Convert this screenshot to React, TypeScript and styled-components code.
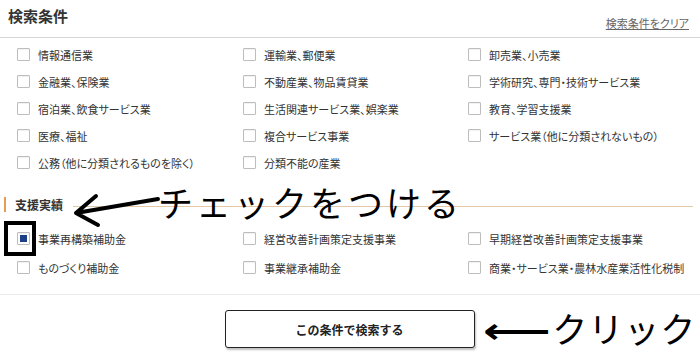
import React from "react";
import styled, { createGlobalStyle } from "styled-components";

const Global = createGlobalStyle`
  html, body { margin: 0; padding: 0; background: #fff; }
  body {
    font-family: "Noto Sans CJK JP", "Noto Sans", sans-serif;
    color: #333;
    font-feature-settings: "palt";
  }
  * { box-sizing: border-box; }
`;

const Page = styled.div`
  position: relative;
  width: 700px;
  height: 356px;
  overflow: hidden;
  background: #fff;
`;

const Header = styled.div`
  display: flex;
  justify-content: space-between;
  align-items: flex-end;
  height: 38px;
  padding: 0 11px 7px 8px;
  border-bottom: 1px solid #d6d6d6;
`;

const Title = styled.h2`
  margin: 0 0 5px;
  font-size: 15px;
  font-weight: 700;
  line-height: 18px;
  color: #333;
  font-feature-settings: normal;
`;

const ClearLink = styled.a`
  font-size: 11px;
  line-height: 14px;
  color: #666;
  text-decoration: underline;
  cursor: pointer;
`;

const Grid = styled.div<{ $rowH: number; $top: number }>`
  display: grid;
  grid-template-columns: 226px 225px 1fr;
  grid-auto-rows: ${(p) => p.$rowH}px;
  padding: ${(p) => p.$top}px 0 0 17px;
`;

const Item = styled.label`
  display: flex;
  align-items: center;
  gap: 8px;
  font-size: 11px;
  color: #333;
  white-space: nowrap;
`;

const Box = styled.span<{ $checked?: boolean }>`
  position: relative;
  flex: none;
  width: 13px;
  height: 13px;
  border: 1px solid #bdbdbd;
  border-radius: 1px;
  background: #fff;
  box-shadow: inset 0 1px 1px rgba(0, 0, 0, 0.06);
  display: flex;
  align-items: center;
  justify-content: center;
  &::after {
    content: "";
    display: ${(p) => (p.$checked ? "block" : "none")};
    width: 7px;
    height: 7px;
    background: #1c3f86;
  }
`;

const SectionHead = styled.div`
  display: flex;
  align-items: center;
  margin: 20px 7px 0 4px;
  height: 16px;
`;

const Bar = styled.span`
  width: 2px;
  height: 15px;
  background: #e59a55;
`;

const SectionTitle = styled.span`
  margin-left: 9px;
  font-size: 12px;
  font-weight: 700;
  color: #333;
`;

const SectionLine = styled.span`
  flex: 1;
  height: 1px;
  margin: 4px 0 0 10px;
  background: #e2c7a9;
`;

const Footer = styled.div`
  margin-top: 12px;
  border-top: 1px solid #ececec;
  display: flex;
  justify-content: center;
  padding-top: 15px;
`;

const SearchButton = styled.button`
  width: 250px;
  height: 38px;
  margin-left: -1px;
  border: 1px solid #222;
  border-radius: 3px;
  background: #fff;
  box-shadow: 1px 2px 2px rgba(0, 0, 0, 0.25);
  font-family: "Noto Sans CJK JP", sans-serif;
  font-size: 12px;
  font-weight: 700;
  color: #222;
`;

const Highlight = styled.div`
  position: absolute;
  left: 4px;
  top: 221px;
  width: 32px;
  height: 35px;
  border: 4px solid #000;
`;

const Note = styled.div<{ $x: number; $y: number; $ls: number }>`
  position: absolute;
  left: ${(p) => p.$x}px;
  top: ${(p) => p.$y}px;
  font-family: "Noto Sans CJK JP", sans-serif;
  font-size: 35px;
  line-height: 44px;
  font-weight: 400;
  color: #000;
  white-space: nowrap;
  letter-spacing: ${(p) => p.$ls}px;
  font-feature-settings: normal;
`;

const LongArrow = styled.span`
  font-family: "DejaVu Sans", sans-serif;
  font-weight: 700;
  display: inline-block;
  transform: scaleX(1.35);
  transform-origin: left center;
  margin-right: 18px;
`;

const ArrowSvg = styled.svg`
  position: absolute;
  left: 60px;
  top: 185px;
`;

const industries = [
  "情報通信業",
  "運輸業、郵便業",
  "卸売業、小売業",
  "金融業、保険業",
  "不動産業、物品賃貸業",
  "学術研究、専門・技術サービス業",
  "宿泊業、飲食サービス業",
  "生活関連サービス業、娯楽業",
  "教育、学習支援業",
  "医療、福祉",
  "複合サービス事業",
  "サービス業（他に分類されないもの）",
  "公務（他に分類されるものを除く）",
  "分類不能の産業",
];

const supports = [
  "事業再構築補助金",
  "経営改善計画策定支援事業",
  "早期経営改善計画策定支援事業",
  "ものづくり補助金",
  "事業継承補助金",
  "商業・サービス業・農林水産業活性化税制",
];

export default function App() {
  return (
    <Page>
      <Global />
      <Header>
        <Title>検索条件</Title>
        <ClearLink>検索条件をクリア</ClearLink>
      </Header>
      <Grid $rowH={27} $top={3}>
        {industries.map((t) => (
          <Item key={t}>
            <Box />
            {t}
          </Item>
        ))}
      </Grid>
      <SectionHead>
        <Bar />
        <SectionTitle>支援実績</SectionTitle>
        <SectionLine />
      </SectionHead>
      <Grid $rowH={29} $top={12}>
        {supports.map((t, i) => (
          <Item key={t}>
            <Box $checked={i === 0} />
            {t}
          </Item>
        ))}
      </Grid>
      <Footer>
        <SearchButton>この条件で検索する</SearchButton>
      </Footer>

      <Highlight />
      <ArrowSvg width="110" height="50" viewBox="0 0 110 50">
        <path
          d="M98 14 L16 28 M36 11 L16 28 L38 40"
          fill="none"
          stroke="#000"
          strokeWidth="4"
          strokeLinecap="round"
          strokeLinejoin="round"
        />
      </ArrowSvg>
      <Note $x={158} $y={180} $ls={3}>チェックをつける</Note>
      <Note $x={483} $y={306} $ls={1}>
        <LongArrow>⟵</LongArrow>クリック
      </Note>
    </Page>
  );
}
